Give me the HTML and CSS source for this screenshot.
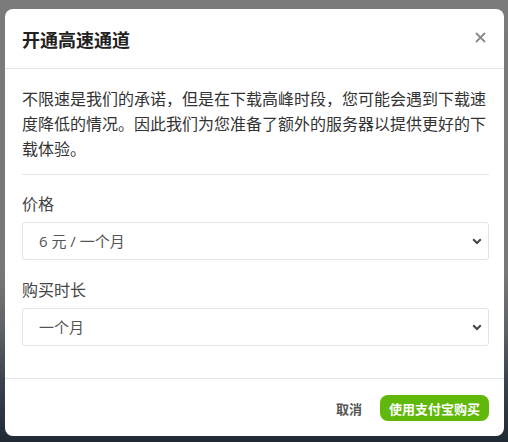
FILE: index.html
```html
<!DOCTYPE html>
<html lang="zh-CN">
<head>
<meta charset="utf-8">
<link rel="stylesheet" href="styles.css">
</head>
<body>
<div class="modal">
  <div class="modal-header">
    <h2 class="title">开通高速通道</h2>
    <button class="close" aria-label="关闭">
      <svg width="11" height="11" viewBox="0 0 11 11"><path d="M1 1L10 10M10 1L1 10" stroke="#8a8a8a" stroke-width="1.8" fill="none"/></svg>
    </button>
  </div>
  <div class="modal-body">
    <p class="desc">不限速是我们的承诺，但是在下载高峰时段，您可能会遇到下载速度降低的情况。因此我们为您准备了额外的服务器以提供更好的下载体验。</p>
    <div class="divider"></div>
    <label class="label">价格</label>
    <div class="select"><span>6 元 / 一个月</span>
      <svg width="10" height="7" viewBox="0 0 10 7"><path d="M1.2 1.3L5 5L8.8 1.3" stroke="#444" stroke-width="2" fill="none"/></svg>
    </div>
    <label class="label">购买时长</label>
    <div class="select"><span>一个月</span>
      <svg width="10" height="7" viewBox="0 0 10 7"><path d="M1.2 1.3L5 5L8.8 1.3" stroke="#444" stroke-width="2" fill="none"/></svg>
    </div>
  </div>
  <div class="modal-footer">
    <button class="btn-cancel">取消</button>
    <button class="btn-buy">使用支付宝购买</button>
  </div>
</div>
</body>
</html>
```

FILE: styles.css
```css
html, body {
  margin: 0;
  height: 100%;
}
body {
  background: linear-gradient(180deg, #7a7a7a 0%, #777 62%, #5d6166 75%, #3a434d 86%, #1f2a35 100%);
  font-family: "Open Sans", "Noto Sans CJK SC", sans-serif;
  padding: 9px 4px 0 5px;
  box-sizing: border-box;
  overflow: hidden;
}
.modal {
  background: #fff;
  border-radius: 8px;
  width: 499px;
  height: 427px;
  display: flex;
  flex-direction: column;
}
.modal-header {
  display: flex;
  align-items: center;
  justify-content: space-between;
  padding: 18px 18px 17px 17px;
  border-bottom: 1px solid #dfe5ec;
}
.title {
  margin: 0;
  font-size: 18px;
  line-height: 24px;
  font-weight: 700;
  color: #222;
  font-family: "Noto Sans CJK SC", sans-serif;
}
.close {
  border: 0;
  background: none;
  padding: 0;
  width: 11px;
  height: 11px;
  display: flex;
  margin-right: 0;
  margin-top: -3px;
}
.modal-body {
  padding: 17px 15px 0 17px;
  flex: 1;
}
.desc {
  margin: 0;
  font-size: 16px;
  line-height: 25px;
  color: #333;
  font-family: "Noto Sans CJK SC", sans-serif;
}
.divider {
  height: 1px;
  background: #e6e6e6;
  margin: 13px 0 16px;
}
.label {
  display: block;
  font-size: 16px;
  line-height: 24px;
  color: #444;
  font-family: "Noto Sans CJK SC", sans-serif;
  margin-bottom: 7px;
}
.select {
  height: 38px;
  box-sizing: border-box;
  border: 1px solid #dfe3ea;
  border-radius: 3px;
  display: flex;
  align-items: center;
  justify-content: space-between;
  padding: 0 6px 0 16px;
  font-size: 15px;
  color: #555;
  margin-bottom: 17px;
}
.select span {
  margin-top: -1px;
}
.modal-footer {
  border-top: 1px solid #dfe5ec;
  padding: 16px 15px 15px;
  display: flex;
  justify-content: flex-end;
  align-items: center;
  gap: 18px;
}
.btn-cancel {
  border: 0;
  background: none;
  padding: 0;
  font-size: 13px;
  font-weight: 700;
  color: #555;
  font-family: "Noto Sans CJK SC", sans-serif;
}
.btn-buy {
  border: 0;
  background: #5fb80a;
  color: #fff;
  font-size: 13px;
  font-weight: 700;
  font-family: "Noto Sans CJK SC", sans-serif;
  height: 26px;
  padding: 0 9px;
  border-radius: 8px;
}
```
